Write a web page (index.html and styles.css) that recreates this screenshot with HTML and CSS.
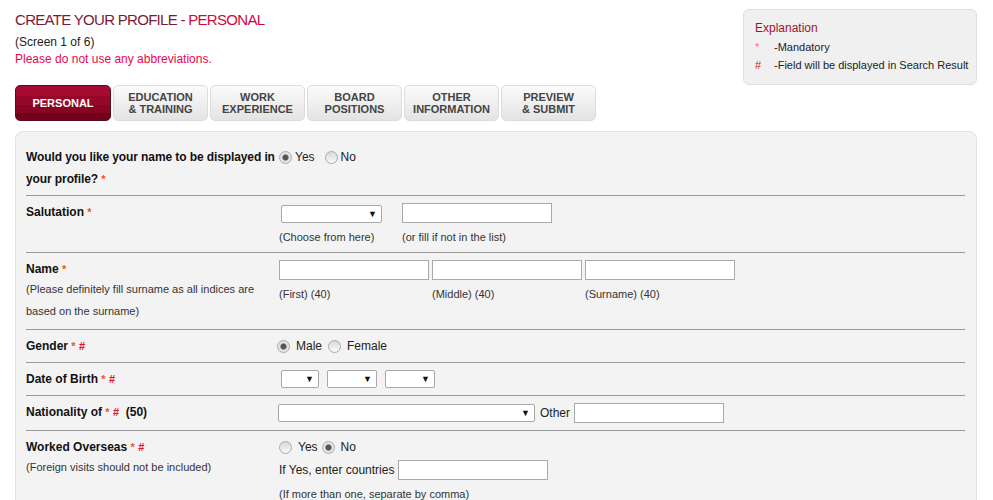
FILE: index.html
```html
<!DOCTYPE html>
<html lang="en">
<head>
  <meta charset="UTF-8" />
  <title>Create Your Profile - Personal</title>
  <link rel="stylesheet" href="styles.css">
</head>
<body>
  <div class="page">
    <div class="header">
      <div class="intro">
        <h1 class="title">CREATE YOUR PROFILE - <span class="title-section">PERSONAL</span></h1>
        <p class="screen">(Screen 1 of 6)</p>
        <p class="warning">Please do not use any abbreviations.</p>
      </div>
      <div class="legend">
        <div class="legend-title">Explanation</div>
        <div class="legend-row"><span class="legend-mark star">*</span>-Mandatory</div>
        <div class="legend-row"><span class="legend-mark hash">#</span>-Field will be displayed in Search Result</div>
      </div>
    </div>

    <!-- step tabs -->
    <ul class="tabs">
      <li class="tab active">PERSONAL</li>
      <li class="tab">EDUCATION<br>&amp; TRAINING</li>
      <li class="tab">WORK<br>EXPERIENCE</li>
      <li class="tab">BOARD<br>POSITIONS</li>
      <li class="tab">OTHER<br>INFORMATION</li>
      <li class="tab">PREVIEW<br>&amp; SUBMIT</li>
    </ul>

    <form class="panel">
      <div class="row row-first">
        <div class="label tall">Would you like your name to be displayed in<br>your profile? <span class="req">*</span></div>
        <div class="field">
          <div class="line tall">
            <label class="choice"><input type="radio" name="show" checked> Yes</label>
            <label class="choice"><input type="radio" name="show"> No</label>
          </div>
        </div>
      </div>

      <div class="row">
        <div class="label">Salutation <span class="req">*</span></div>
        <div class="field">
          <div class="cells">
            <div class="cell cell-salutation">
              <span class="select sel-salutation"><select></select></span>
              <div class="hint">(Choose from here)</div>
            </div>
            <div class="cell">
              <input type="text" class="text">
              <div class="hint">(or fill if not in the list)</div>
            </div>
          </div>
        </div>
      </div>

      <div class="row">
        <div class="label">Name <span class="req">*</span>
          <div class="sublabel">(Please definitely fill surname as all indices are<br>based on the surname)</div>
        </div>
        <div class="field">
          <div class="cells name-cells">
            <div class="cell">
              <input type="text" class="text">
              <div class="hint">(First) (40)</div>
            </div>
            <div class="cell">
              <input type="text" class="text">
              <div class="hint">(Middle) (40)</div>
            </div>
            <div class="cell">
              <input type="text" class="text">
              <div class="hint">(Surname) (40)</div>
            </div>
          </div>
        </div>
      </div>

      <div class="row">
        <div class="label">Gender <span class="req">*</span> <span class="hash">#</span></div>
        <div class="field">
          <div class="line gender">
            <label class="choice"><input type="radio" name="gender" checked> Male</label>
            <label class="choice"><input type="radio" name="gender"> Female</label>
          </div>
        </div>
      </div>

      <div class="row">
        <div class="label">Date of Birth <span class="req">*</span> <span class="hash">#</span></div>
        <div class="field">
          <div class="line dob">
            <span class="select sel-day"><select></select></span>
            <span class="select sel-month"><select></select></span>
            <span class="select sel-year"><select></select></span>
          </div>
        </div>
      </div>

      <div class="row">
        <div class="label">Nationality of <span class="req">*</span> <span class="hash">#</span> &nbsp;(50)</div>
        <div class="field">
          <div class="line nationality">
            <span class="select sel-nation"><select></select></span>
            <span class="plain">Other</span>
            <input type="text" class="text">
          </div>
        </div>
      </div>

      <div class="row">
        <div class="label">Worked Overseas <span class="req">*</span> <span class="hash">#</span>
          <div class="sublabel">(Foreign visits should not be included)</div>
        </div>
        <div class="field">
          <div class="line overseas">
            <label class="choice"><input type="radio" name="overseas"> Yes</label>
            <label class="choice"><input type="radio" name="overseas" checked> No</label>
          </div>
          <div class="line countries">
            <span class="plain">If Yes, enter countries</span>
            <input type="text" class="text">
          </div>
          <div class="hint">(If more than one, separate by comma)</div>
        </div>
      </div>
    </form>
  </div>
</body>
</html>
```

FILE: styles.css
```css
body {
  margin: 0;
  font-family: "Liberation Sans", Arial, sans-serif;
  font-size: 12px;
  color: #222;
  background-color: #fff;
}
.page {
  width: 962px;
  padding-left: 15px;
}
.header {
  display: flex;
  justify-content: space-between;
  align-items: flex-start;
}
.title {
  margin: 11px 0 0;
  font-size: 15px;
  line-height: 18px;
  font-weight: normal;
  letter-spacing: -0.7px;
  color: #7d1937;
}
.title-section {
  color: #cc0a3c;
}
.screen {
  margin: 5px 0 0;
  line-height: 16px;
  color: #222;
}
.warning {
  margin: 1px 0 0;
  line-height: 16px;
  color: #e8084e;
}
.legend {
  margin-top: 9px;
  width: 211px;
  height: 54px;
  padding: 10px 10px 10px 11px;
  background-color: #f0f0f0;
  border: 1px solid #dedede;
  border-radius: 6px;
}
.legend-title {
  line-height: 16px;
  margin-bottom: 2px;
  color: #a0142e;
}
.legend-row {
  font-size: 11px;
  line-height: 18px;
  white-space: nowrap;
  color: #222;
}
.legend-mark {
  display: inline-block;
  width: 19px;
}
.legend-mark.star {
  color: #ff6f8a;
}
.legend-mark.hash {
  color: #e0102a;
}
.tabs {
  display: flex;
  gap: 2px;
  margin: 0;
  padding: 0;
  list-style: none;
}
.tab {
  box-sizing: border-box;
  width: 95px;
  height: 36px;
  display: flex;
  align-items: center;
  justify-content: center;
  text-align: center;
  font-size: 11px;
  line-height: 12px;
  font-weight: bold;
  color: #444;
  border: 1px solid #dcdcdc;
  border-radius: 5px;
  background: linear-gradient(#fbfbfb, #e3e3e3);
}
.tab.active {
  width: 96px;
  color: #fff;
  border-color: #5c0a1c;
  background: linear-gradient(#a50b30 0, #a50b30 30%, #960829 30%, #960829 55%, #850522 55%, #850522 78%, #72021b 78%);
}
.panel {
  display: block;
  margin-top: 10px;
  padding: 8px 11px 0 10px;
  min-height: 400px;
  background-color: #f3f3f3;
  border: 1px solid #e2e2e2;
  border-radius: 8px 8px 0 0;
}
.row {
  display: flex;
  padding: 7px 0 7px;
  border-bottom: 1px solid #999;
}
.row:last-child {
  border-bottom: none;
}
.row-first {
  padding: 6px 0 5px;
}
.label {
  width: 253px;
  flex-shrink: 0;
  font-weight: bold;
  line-height: 18px;
  color: #111;
}
.label.tall {
  line-height: 22px;
  white-space: nowrap;
  letter-spacing: -0.1px;
}
.req {
  color: #f0502a;
  font-size: 11px;
}
.hash {
  color: #e8102a;
  font-size: 11px;
}
.sublabel {
  font-weight: normal;
  font-size: 11px;
  line-height: 22px;
  color: #333;
}
.field {
  flex: 1;
}
.line {
  display: flex;
  align-items: center;
  min-height: 18px;
}
.line.tall {
  min-height: 22px;
}
.choice {
  display: inline-flex;
  align-items: center;
  margin-right: 10px;
  color: #222;
}
.choice input {
  appearance: none;
  width: 13px;
  height: 13px;
  margin: 0 3px 0 0;
  border: 1px solid #a9a9a9;
  border-radius: 50%;
  background: linear-gradient(#d8d8d8, #fafafa);
}
.choice input:checked {
  background: radial-gradient(circle, #555 0, #555 2.5px, #dcdcdc 3.5px, #f4f4f4 100%);
}
.gender .choice {
  margin-right: 8px;
}
.gender .choice input {
  margin-left: -2px;
  margin-right: 6px;
}
.overseas .choice input {
  margin-right: 6px;
}
.overseas .choice {
  margin-right: 4px;
}
.cells {
  display: flex;
  gap: 4px;
}
.cell-salutation {
  width: 119px;
}
.hint {
  margin-top: 6px;
  font-size: 11px;
  line-height: 16px;
  color: #333;
}
.text {
  box-sizing: border-box;
  width: 150px;
  height: 20px;
  margin: 0;
  padding: 1px 3px;
  border: 1px solid #a9a9a9;
  background-color: #fff;
  font: inherit;
}
.name-cells {
  gap: 3px;
}
.name-cells .cell {
  width: 150px;
}
.select {
  position: relative;
  display: inline-block;
}
.select select {
  appearance: none;
  box-sizing: border-box;
  display: block;
  height: 18px;
  margin: 0;
  border: 1px solid #a9a9a9;
  border-radius: 2px;
  background-color: #fff;
}
.select::after {
  content: "\25BC";
  position: absolute;
  right: 5px;
  top: 3px;
  font-size: 9px;
  line-height: 12px;
  color: #111;
  pointer-events: none;
}
.sel-salutation {
  margin: 2px 0 0 2px;
}
.sel-salutation select {
  width: 101px;
}
.dob {
  gap: 8px;
  padding-left: 2px;
}
.sel-day select {
  width: 38px;
}
.sel-month select,
.sel-year select {
  width: 50px;
}
.nationality .sel-nation {
  margin-left: -1px;
}
.sel-nation select {
  width: 257px;
  height: 18px;
}
.nationality .plain {
  margin: 0 4px 0 5px;
}
.nationality {
  min-height: 20px;
}
.countries {
  margin-top: 4px;
}
.countries .plain {
  margin-right: 4px;
}
```
